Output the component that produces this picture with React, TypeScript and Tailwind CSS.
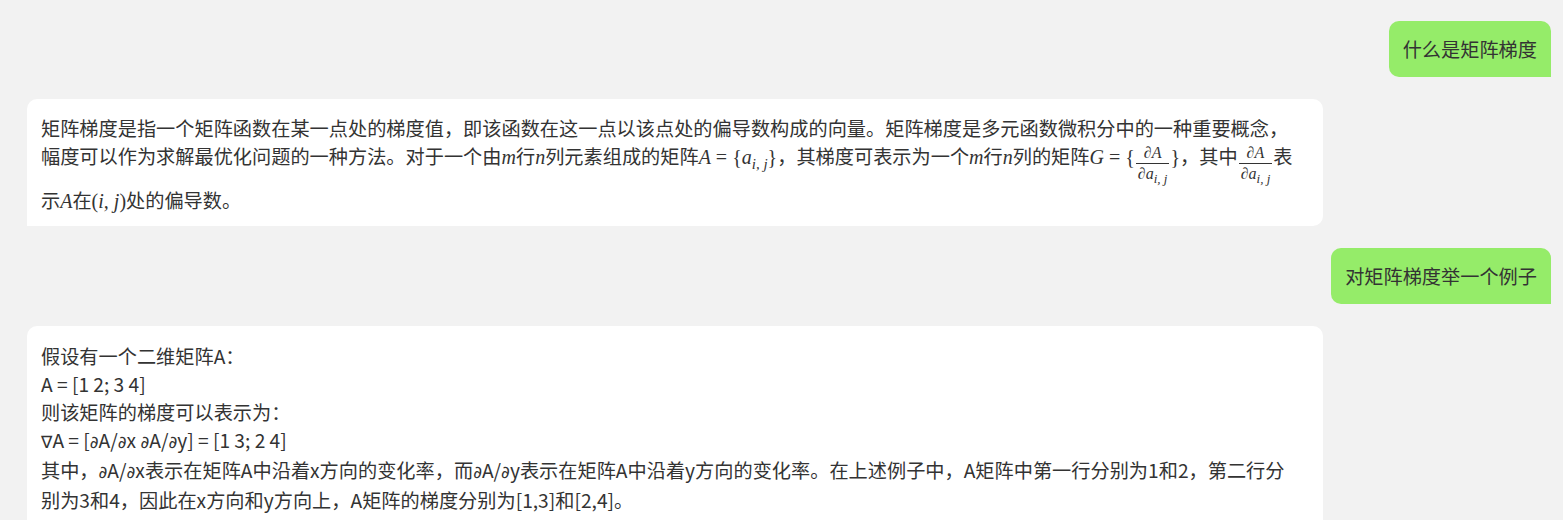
import React from "react";

const M = ({ children }: { children: React.ReactNode }) => (
  <span className="font-['Liberation_Serif',serif] italic text-[20px]">{children}</span>
);
const R = ({ children }: { children: React.ReactNode }) => (
  <span className="font-['Liberation_Serif',serif] not-italic text-[20px]">{children}</span>
);
const S = ({ children }: { children: React.ReactNode }) => (
  <span className="font-['DejaVu_Sans',sans-serif] text-[17px]">{children}</span>
);

const Frac = () => (
  <span className="inline-flex flex-col items-center align-[6px] mx-[1px] font-['Liberation_Serif',serif] leading-none">
    <span className="italic text-[16px] pb-[3px] leading-[15px]">∂A</span>
    <span className="border-t border-[#333] px-[2px] pt-[2px] italic text-[16px] leading-[15px] whitespace-nowrap">
      ∂a<span className="text-[13px] relative top-[4px]">i, j</span>
    </span>
  </span>
);

const User = ({ text }: { text: string }) => (
  <div className="flex justify-end pr-[12px]">
    <div className="bg-[#95ec69] rounded-[10px] rounded-br-none px-[14px] py-[14px] leading-[28px]">
      {text}
    </div>
  </div>
);

export default function App() {
  return (
    <div className="min-h-[520px] bg-[#f2f2f2] pt-[21px] text-[#333] text-[19.2px] font-['Noto_Sans_CJK_SC','Noto_Sans',sans-serif] flex flex-col gap-[22px] overflow-hidden">
      <User text="什么是矩阵梯度" />
      <div className="ml-[27px] w-[1296px] bg-white rounded-[10px] rounded-bl-none px-[14px] pt-[15px] pb-[12px] whitespace-nowrap">
        <div className="h-[28px] leading-[28px]">
          矩阵梯度是指一个矩阵函数在某一点处的梯度值，即该函数在这一点以该点处的偏导数构成的向量。矩阵梯度是多元函数微积分中的一种重要概念，
        </div>
        <div className="h-[44px] leading-[28px]">
          幅度可以作为求解最优化问题的一种方法。对于一个由<M>m</M>行<M>n</M>列元素组成的矩阵<M>A</M>
          <R>&nbsp;=&nbsp;{"{"}</R>
          <M>a</M>
          <span className="font-['Liberation_Serif',serif] italic text-[15px] relative top-[5px]">i, j</span>
          <R>{"}"}</R>，其梯度可表示为一个<M>m</M>行<M>n</M>列的矩阵<M>G</M>
          <R>&nbsp;=&nbsp;{"{"}</R>
          <Frac />
          <R>{"}"}</R>，其中<Frac />表
        </div>
        <div className="h-[28px] leading-[28px]">
          示<M>A</M>在<R>(</R><M>i, j</M><R>)</R>处的偏导数。
        </div>
      </div>
      <User text="对矩阵梯度举一个例子" />
      <div className="ml-[27px] w-[1296px] bg-white rounded-[10px] rounded-bl-none px-[14px] pt-[16px] pb-[16px] whitespace-nowrap leading-[28px]">
        <div>假设有一个二维矩阵A：</div>
        <div>A = [1 2; 3 4]</div>
        <div>则该矩阵的梯度可以表示为：</div>
        <div>
          <S>∇</S>A = [<S>∂</S>A/<S>∂</S>x <S>∂</S>A/<S>∂</S>y] = [1 3; 2 4]
        </div>
        <div>
          其中，<S>∂</S>A/<S>∂</S>x表示在矩阵A中沿着x方向的变化率，而<S>∂</S>A/<S>∂</S>y表示在矩阵A中沿着y方向的变化率。在上述例子中，A矩阵中第一行分别为1和2，第二行分
        </div>
        <div>别为3和4，因此在x方向和y方向上，A矩阵的梯度分别为[1,3]和[2,4]。</div>
      </div>
    </div>
  );
}
